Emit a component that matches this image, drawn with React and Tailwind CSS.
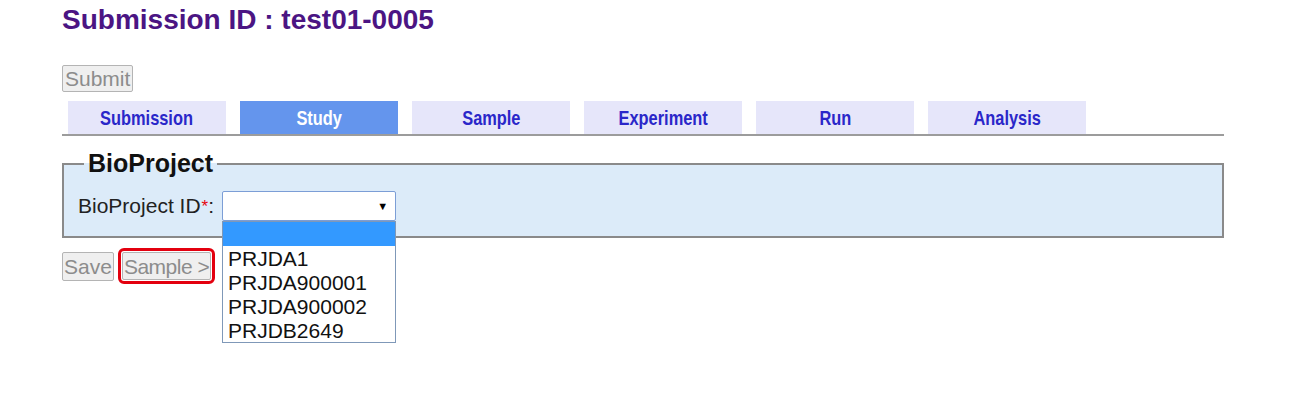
import React from 'react';

const tabs = ['Submission', 'Study', 'Sample', 'Experiment', 'Run', 'Analysis'];
const options = ['PRJDA1', 'PRJDA900001', 'PRJDA900002', 'PRJDB2649'];

export default function App() {
  return (
    <div className="min-h-[403px] w-[1293px] bg-white font-['Liberation_Sans',Arial,sans-serif]">
      <div className="w-[1224px] pl-[62px]">
        {/* Header */}
        <h1 className="mt-[4px] text-[28px] leading-[32px] font-bold text-[#4b1583]">
          Submission ID : test01-0005
        </h1>

        <div className="mt-[29px]">
          <button className="h-[27px] px-[2px] border border-[#b4b4b4] rounded-[2px] bg-[#efefef] text-[21px] leading-[25px] text-[#8c8c8c]">
            Submit
          </button>
        </div>

        {/* Tabs */}
        <div className="mt-[8px] border-b-2 border-[#9c9c9c]">
          <div className="ml-[6px] flex gap-[14px]">
            {tabs.map((t) => (
              <div
                key={t}
                className={`w-[158px] h-[33px] flex items-center justify-center ${
                  t === 'Study' ? 'bg-[#6495ed] text-white' : 'bg-[#e6e6fa] text-[#2a27c9]'
                }`}
              >
                <span className="inline-block scale-x-[0.78] text-[21px] leading-[24px] font-bold">{t}</span>
              </div>
            ))}
          </div>
        </div>

        {/* BioProject fieldset */}
        <fieldset className="mt-[13px] border-2 border-[#8a8a8a] bg-[#dcebf9] px-[14px] pt-[13px] pb-[15px]">
          <legend className="ml-[6px] px-[4px] text-[25px] leading-[29px] font-bold text-[#111]">
            BioProject
          </legend>
          <div className="flex items-center gap-[8px]">
            <label className="text-[21px] leading-[24px] text-[#222]">
              BioProject ID<sup className="text-[17px] text-red-600 relative top-[-1px] ml-[1px]">*</sup>:
            </label>
            <div className="relative">
              <div className="w-[174px] h-[30px] bg-white border border-[#7c9ed6] rounded-[2px] flex items-center justify-end pr-[7px]">
                <span className="text-[11px] text-black">▼</span>
              </div>
              {/* Open dropdown list */}
              <div className="absolute left-0 top-[30px] w-[174px] bg-white border border-[#7f98b8] z-10">
                <div className="h-[24px] bg-[#3399ff]" />
                {options.map((o) => (
                  <div key={o} className="h-[24px] pl-[5px] text-[21px] leading-[25px] text-[#111]">
                    {o}
                  </div>
                ))}
              </div>
            </div>
          </div>
        </fieldset>

        {/* Actions */}
        <div className="mt-[10px] flex items-center gap-[4px]">
          <button className="h-[29px] px-[1px] border border-[#b4b4b4] rounded-[2px] bg-[#efefef] text-[21px] leading-[25px] text-[#8c8c8c]">
            Save
          </button>
          <span className="border-[3px] border-[#e3000f] rounded-[6px] p-px">
            <button className="h-[28px] px-[1px] border border-[#b4b4b4] rounded-[2px] bg-[#efefef] text-[21px] leading-[25px] tracking-[-0.5px] text-[#8c8c8c] block">
              Sample &gt;
            </button>
          </span>
        </div>
      </div>
    </div>
  );
}
